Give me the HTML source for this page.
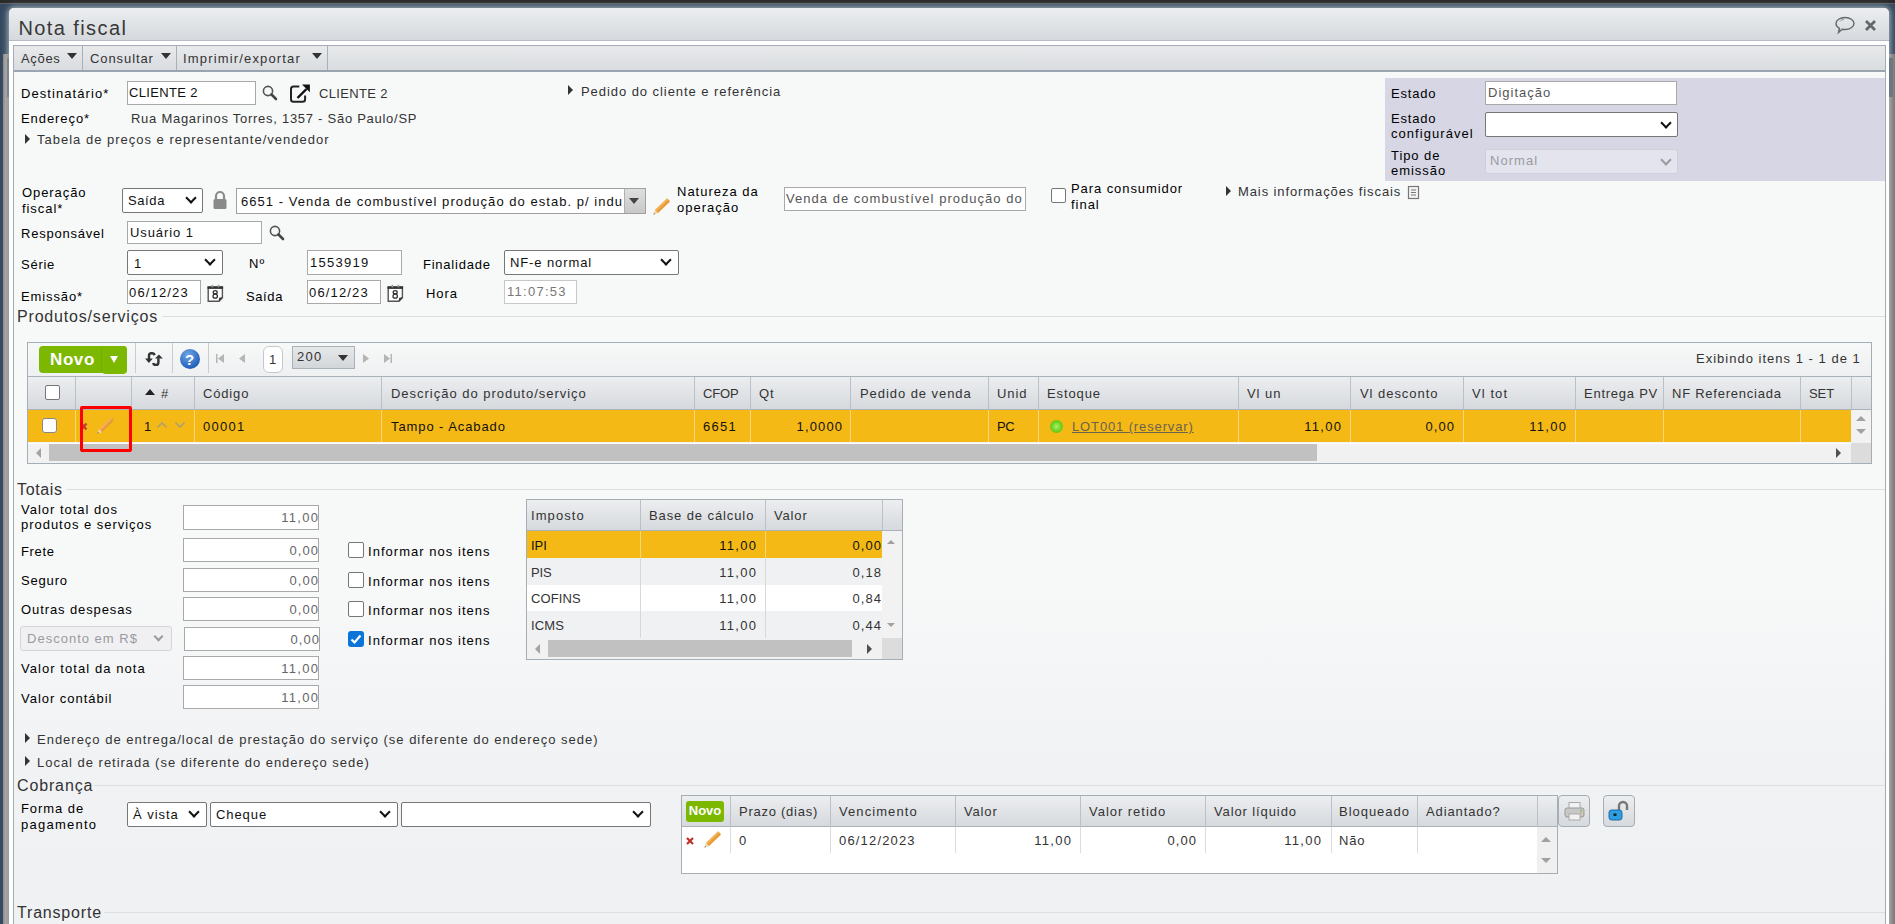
<!DOCTYPE html>
<html><head><meta charset="utf-8">
<style>
*{box-sizing:border-box}
html,body{margin:0;padding:0}
body{width:1895px;height:924px;overflow:hidden;position:relative;background:#34495f;font-family:"Liberation Sans",sans-serif;font-size:13px;letter-spacing:0.8px;color:#000}
.a{position:absolute;white-space:nowrap}
.t{position:absolute;white-space:nowrap;line-height:16px;height:16px}
.g{color:#333}
.inp{position:absolute;background:#fff;border:1px solid #a9a9a9}
.sel{position:absolute;background:#fff;border:1px solid #767676;border-radius:2px}
.chev{position:absolute;margin-left:1px;width:8px;height:8px;border-right:2px solid #111;border-bottom:2px solid #111;transform:rotate(45deg)}
.tri{position:absolute;width:0;height:0;border-top:5px solid transparent;border-bottom:5px solid transparent;border-left:5px solid #333;margin-top:-1px}
.cb{position:absolute;width:14px;height:14px;border:1px solid #767676;border-radius:2px;background:#fff}
.sec{position:absolute;font-size:16px;letter-spacing:0.3px;color:#333;line-height:20px}
.hl{position:absolute;height:1px;background:#dcdee0}
.vl{position:absolute;width:1px}
.hdr{position:absolute;background:linear-gradient(#eceef0,#d6d9dd)}
</style></head><body>
<!-- background -->
<div class="a" style="left:0;top:0;width:1895px;height:3px;background:#2b2b2b"></div>
<div class="a" style="left:0;top:3px;width:1895px;height:1px;background:#5a5f66"></div>
<div class="a" style="left:9px;top:8px;width:1880px;height:916px;box-shadow:0 0 6px 1px rgba(200,207,214,0.85);border-radius:5px 5px 0 0"></div>
<div class="a" style="left:3px;top:54px;width:6px;height:870px;background:linear-gradient(90deg,#8a8a8a,#a5a5a5 40%,#9a9a9a)"></div>
<div class="a" style="left:1889px;top:54px;width:6px;height:870px;background:linear-gradient(90deg,#a8a8a8,#8c8c8c 50%,#7a7a7a)"></div>
<div class="a" style="left:7px;top:58px;width:2px;height:39px;background:#7d858d"></div>
<div class="a" style="left:1889px;top:58px;width:4px;height:39px;background:#6f7882"></div>
<div class="a" style="left:1892px;top:110px;width:1px;height:814px;background:#8a8a8a"></div>
<!-- window -->
<div class="a" style="left:9px;top:8px;width:1880px;height:916px;background:#fff;border-radius:5px 5px 0 0;overflow:hidden">
  <div class="a" style="left:0;top:0;width:1880px;height:33px;background:linear-gradient(#eceef0,#d5d9dd);border-bottom:1px solid #b5bcc4"></div>
</div>
<div class="a ls" style="left: 18.5px; top: 15px; font-size: 20px; letter-spacing: 1.4px; color: rgb(56, 56, 56); line-height: 26px;">Nota fiscal</div>
<!-- content panel -->
<div class="a" style="left:13px;top:45px;width:1873px;height:879px;border:1px solid #a3acb5;border-bottom:none;background:linear-gradient(#f7f9f9 0px,#f7f8f8 540px,#f1f2f4 720px,#f0f1f3 879px)"></div>
<!-- toolbar -->
<div class="a" style="left:14px;top:46px;width:1871px;height:26px;background:linear-gradient(#e8eaec,#d9dce0);border-bottom:2px solid #9ba5af"></div>
<div class="vl" style="left:82px;top:46px;height:24px;background:#a8b0b8"></div>
<div class="vl" style="left:176px;top:46px;height:24px;background:#a8b0b8"></div>
<div class="vl" style="left:327px;top:46px;height:24px;background:#a8b0b8"></div>

<!-- toolbar texts -->
<div class="t g" style="left: 21px; top: 51px; letter-spacing: 0.67px;">Ações</div>
<div class="a" style="left:67px;top:53px;width:0;height:0;border-left:5px solid transparent;border-right:5px solid transparent;border-top:6px solid #333"></div>
<div class="t g" style="left: 90px; top: 51px; letter-spacing: 0.91px;">Consultar</div>
<div class="a" style="left:161px;top:53px;width:0;height:0;border-left:5px solid transparent;border-right:5px solid transparent;border-top:6px solid #333"></div>
<div class="t g" style="left: 183px; top: 51px; letter-spacing: 1.16px;">Imprimir/exportar</div>
<div class="a" style="left:312px;top:53px;width:0;height:0;border-left:5px solid transparent;border-right:5px solid transparent;border-top:6px solid #333"></div>
<!-- title icons -->
<svg class="a" style="left:1834px;top:15px" width="22" height="20" viewBox="0 0 22 20"><path d="M11 2.5c5 0 9 2.7 9 6s-4 6-9 6c-1 0-2-.1-2.9-.3L4.5 17.5l.9-4.2C3.3 12.2 2 10.5 2 8.5c0-3.3 4-6 9-6z" fill="none" stroke="#666" stroke-width="1.4"></path><path d="M6 6.5c1-1.3 2.5-2 4-2.2" fill="none" stroke="#888" stroke-width="1"></path></svg>
<svg class="a" style="left:1864px;top:19px" width="13" height="13" viewBox="0 0 13 13"><path d="M2 2L11 11M11 2L2 11" stroke="#666" stroke-width="2.8" stroke-linecap="butt"></path></svg>

<!-- Destinatario row -->
<div class="t" style="left: 21px; top: 86px; letter-spacing: 1.07px;">Destinatário*</div>
<div class="inp" style="left:127px;top:81px;width:129px;height:24px"></div>
<div class="t" style="left: 129px; top: 85px; color: rgb(17, 17, 17); letter-spacing: 0.34px;">CLIENTE 2</div>
<svg class="a" style="left:261px;top:84px" width="18" height="17" viewBox="0 0 18 17"><circle cx="7" cy="7" r="4.6" fill="none" stroke="#555" stroke-width="1.6"></circle><path d="M10.5 10.5L15 15" stroke="#444" stroke-width="2.6" stroke-linecap="round"></path></svg>
<svg class="a" style="left:288px;top:83px" width="24" height="21" viewBox="0 0 24 21"><path d="M11.3 3.4H5.5Q3 3.4 3 6V16.2Q3 18.7 5.5 18.7H14.6Q17.1 18.7 17.1 16.2V12.6" fill="none" stroke="#222" stroke-width="2"></path><path d="M9.5 15L18.5 6" stroke="#111" stroke-width="2.4"></path><path d="M14 1.4H21.9V9.3z" fill="#111"></path></svg>
<div class="t g" style="left: 319px; top: 86px; letter-spacing: 0.34px;">CLIENTE 2</div>
<div class="tri" style="left:568px;top:86px"></div>
<div class="t g" style="left: 581px; top: 84px; letter-spacing: 0.94px;">Pedido do cliente e referência</div>
<div class="t" style="left: 21px; top: 111px; letter-spacing: 0.93px;">Endereço*</div>
<div class="t g" style="left: 131px; top: 111px; letter-spacing: 0.73px;">Rua Magarinos Torres, 1357 - São Paulo/SP</div>
<div class="tri" style="left:25px;top:135px"></div>
<div class="t g" style="left: 37px; top: 132px; letter-spacing: 1px;">Tabela de preços e representante/vendedor</div>

<!-- Estado panel -->
<div class="a" style="left:1385px;top:78px;width:500px;height:103px;background:#d6d6e4"></div>
<div class="t" style="left: 1391px; top: 86px; letter-spacing: 0.81px;">Estado</div>
<div class="inp" style="left:1485px;top:81px;width:192px;height:24px"></div>
<div class="t" style="left: 1488px; top: 85px; color: rgb(85, 85, 85); letter-spacing: 1px;">Digitação</div>
<div class="t" style="left: 1391px; top: 111px; letter-spacing: 0.81px;">Estado</div>
<div class="t" style="left: 1391px; top: 126px; letter-spacing: 1.05px;">configurável</div>
<div class="sel" style="left:1485px;top:112px;width:193px;height:25px"></div>
<div class="chev" style="left:1661px;top:119px"></div>
<div class="t" style="left: 1391px; top: 148px; letter-spacing: 0.93px;">Tipo de</div>
<div class="t" style="left: 1391px; top: 163px; letter-spacing: 0.95px;">emissão</div>
<div class="a" style="left:1485px;top:149px;width:193px;height:25px;background:#e4e4ee;border:1px solid #d0d0da;border-radius:2px"></div>
<div class="t" style="left: 1490px; top: 153px; color: rgb(154, 154, 162); letter-spacing: 1.05px;">Normal</div>
<div class="chev" style="left:1661px;top:156px;border-color:#9a9aa2"></div>

<!-- Operacao fiscal -->
<div class="t" style="left: 22px; top: 185px; letter-spacing: 0.92px;">Operação</div>
<div class="t" style="left: 22px; top: 201px; letter-spacing: 0.93px;">fiscal*</div>
<div class="sel" style="left:122px;top:188px;width:81px;height:25px"></div>
<div class="t" style="left: 128px; top: 193px; color: rgb(17, 17, 17); letter-spacing: 0.6px;">Saída</div>
<div class="chev" style="left:186px;top:194px"></div>
<svg class="a" style="left:212px;top:190px" width="16" height="20" viewBox="0 0 16 20"><path d="M4 9V6a4 4 0 0 1 8 0v3" fill="none" stroke="#8a8a8a" stroke-width="2.2"></path><rect x="1.5" y="9" width="13" height="10" rx="1.5" fill="#8a8a8a"></rect></svg>
<div class="inp" style="left:236px;top:188px;width:410px;height:26px;border-color:#a0a0a0"></div>
<div class="t" style="left: 241px; top: 194px; color: rgb(17, 17, 17); letter-spacing: 1.04px;">6651 - Venda de combustível produção do estab. p/ indu</div>
<div class="a" style="left:624px;top:189px;width:21px;height:24px;background:linear-gradient(#dedede,#c8c8c8);border-left:1px solid #b0b0b0"></div>
<div class="a" style="left:629px;top:198px;width:0;height:0;border-left:5px solid transparent;border-right:5px solid transparent;border-top:6px solid #444"></div>
<svg class="a" style="left:651.8px;top:198.0px" width="20" height="20" viewBox="0 0 20 20"><g transform="translate(1.5,16.5) rotate(-44)"><rect x="4" y="-2.2" width="17.2" height="4.4" rx="1" fill="#eb9a38"></rect><rect x="4" y="-2.2" width="17.2" height="1.8" rx="0.8" fill="#f3b35a"></rect><path d="M0 0L4.2 -2.2V2.2z" fill="#f2d6a8"></path><path d="M0 0L1.4 -0.75V0.75z" fill="#444"></path></g></svg>
<div class="t" style="left: 677px; top: 184px; letter-spacing: 0.99px;">Natureza da</div>
<div class="t" style="left: 677px; top: 200px; letter-spacing: 0.99px;">operação</div>
<div class="inp" style="left:784px;top:187px;width:242px;height:24px"></div>
<div class="t" style="left: 786px; top: 191px; color: rgb(85, 85, 85); letter-spacing: 1.03px;">Venda de combustível produção do</div>
<div class="cb" style="left:1051px;top:188px;width:15px;height:15px"></div>
<div class="t" style="left: 1071px; top: 181px; letter-spacing: 0.92px;">Para consumidor</div>
<div class="t" style="left: 1071px; top: 197px; letter-spacing: 0.97px;">final</div>
<div class="tri" style="left:1226px;top:187px"></div>
<div class="t g" style="left: 1238px; top: 184px; letter-spacing: 0.9px;">Mais informações fiscais</div>
<svg class="a" style="left:1407px;top:185px" width="13" height="15" viewBox="0 0 13 15"><rect x="1.5" y="1.5" width="10" height="12" fill="#f4f4f4" stroke="#777" stroke-width="1.2"></rect><path d="M4 5h5M4 7.5h5M4 10h5" stroke="#777" stroke-width="1"></path></svg>

<!-- Responsavel -->
<div class="t" style="left: 21px; top: 226px; letter-spacing: 0.78px;">Responsável</div>
<div class="inp" style="left:127px;top:221px;width:135px;height:23px"></div>
<div class="t" style="left: 130px; top: 225px; color: rgb(17, 17, 17); letter-spacing: 0.91px;">Usuário 1</div>
<svg class="a" style="left:268px;top:224px" width="18" height="17" viewBox="0 0 18 17"><circle cx="7" cy="7" r="4.6" fill="none" stroke="#555" stroke-width="1.6"></circle><path d="M10.5 10.5L15 15" stroke="#444" stroke-width="2.6" stroke-linecap="round"></path></svg>

<!-- Serie -->
<div class="t" style="left: 21px; top: 257px; letter-spacing: 0.74px;">Série</div>
<div class="sel" style="left:127px;top:250px;width:96px;height:25px"></div>
<div class="t" style="left: 134px; top: 256px; color: rgb(17, 17, 17); letter-spacing: 1.25px;">1</div>
<div class="chev" style="left:205px;top:256px"></div>
<div class="t" style="left: 249px; top: 256px; letter-spacing: 1.06px;">Nº</div>
<div class="inp" style="left:307px;top:250px;width:95px;height:25px"></div>
<div class="t" style="left: 310px; top: 255px; color: rgb(17, 17, 17); letter-spacing: 1.25px;">1553919</div>
<div class="t" style="left: 423px; top: 257px; letter-spacing: 0.77px;">Finalidade</div>
<div class="sel" style="left:504px;top:250px;width:175px;height:25px"></div>
<div class="t" style="left: 510px; top: 255px; color: rgb(17, 17, 17); letter-spacing: 0.89px;">NF-e normal</div>
<div class="chev" style="left:661px;top:256px"></div>

<!-- Emissao -->
<div class="t" style="left: 21px; top: 289px; letter-spacing: 0.88px;">Emissão*</div>
<div class="inp" style="left:127px;top:280px;width:74px;height:24px"></div>
<div class="t" style="left: 129px; top: 285px; color: rgb(17, 17, 17); letter-spacing: 1.16px;">06/12/23</div>
<svg class="a" style="left:206px;top:284px" width="18" height="19" viewBox="0 0 18 19"><path d="M2.2 3.2H16.4V13.6L13 17.2H2.2Z" fill="#fff" stroke="#555" stroke-width="1.4"></path><rect x="1.5" y="2.3" width="15.6" height="2.6" fill="#333"></rect><rect x="5.6" y="0.8" width="1.6" height="2.6" fill="#999"></rect><rect x="11.6" y="0.8" width="1.6" height="2.6" fill="#999"></rect><ellipse cx="9.2" cy="8.3" rx="2" ry="1.7" fill="none" stroke="#333" stroke-width="1.3"></ellipse><ellipse cx="9.2" cy="12.2" rx="2.2" ry="2" fill="none" stroke="#333" stroke-width="1.3"></ellipse><path d="M12.6 17.4L16.8 13.2L13.2 13.8Z" fill="#333"></path></svg>
<div class="t" style="left: 246px; top: 289px; letter-spacing: 0.6px;">Saída</div>
<div class="inp" style="left:307px;top:280px;width:74px;height:24px"></div>
<div class="t" style="left: 309px; top: 285px; color: rgb(17, 17, 17); letter-spacing: 1.16px;">06/12/23</div>
<svg class="a" style="left:386px;top:284px" width="18" height="19" viewBox="0 0 18 19"><path d="M2.2 3.2H16.4V13.6L13 17.2H2.2Z" fill="#fff" stroke="#555" stroke-width="1.4"></path><rect x="1.5" y="2.3" width="15.6" height="2.6" fill="#333"></rect><rect x="5.6" y="0.8" width="1.6" height="2.6" fill="#999"></rect><rect x="11.6" y="0.8" width="1.6" height="2.6" fill="#999"></rect><ellipse cx="9.2" cy="8.3" rx="2" ry="1.7" fill="none" stroke="#333" stroke-width="1.3"></ellipse><ellipse cx="9.2" cy="12.2" rx="2.2" ry="2" fill="none" stroke="#333" stroke-width="1.3"></ellipse><path d="M12.6 17.4L16.8 13.2L13.2 13.8Z" fill="#333"></path></svg>
<div class="t" style="left: 426px; top: 286px; letter-spacing: 0.91px;">Hora</div>
<div class="inp" style="left:504px;top:280px;width:73px;height:24px;border-color:#c8c8c8"></div>
<div class="t" style="left: 507px; top: 284px; color: rgb(119, 119, 119); letter-spacing: 1.28px;">11:07:53</div>

<!-- Produtos/servicos section -->
<div class="sec" style="left: 17px; top: 307px; letter-spacing: 0.82px;">Produtos/serviços</div>
<div class="hl" style="left:162px;top:316px;width:1723px"></div>

<!-- products grid -->
<div class="a" style="left:27px;top:342px;width:1845px;height:122px;border:1px solid #a5adb5;background:#f2f2f2"></div>
<div class="a" style="left:28px;top:343px;width:1843px;height:33px;background:linear-gradient(#f7f8f8,#eef0f1)"></div>
<div class="a" style="left:39px;top:346px;width:88px;height:27px;background:#7cb800;border-radius:4px"></div>
<div class="a" style="left:102px;top:346px;width:25px;height:28px;background:#7cb800;border-radius:4px;box-shadow:-1px 0 0 rgba(0,0,0,0.06)"></div>
<div class="a" style="left:50px;top:349px;font-size:17px;font-weight:bold;color:#fff;letter-spacing:0.6px;line-height:21px">Novo</div>
<div class="a" style="left:110px;top:356px;width:0;height:0;border-left:4px solid transparent;border-right:4px solid transparent;border-top:7px solid #fff"></div>
<div class="vl" style="left:135px;top:343px;height:30px;background:#c8cdd2"></div>
<div class="vl" style="left:172px;top:343px;height:30px;background:#c8cdd2"></div>
<div class="vl" style="left:208px;top:343px;height:30px;background:#c8cdd2"></div>
<svg class="a" style="left:144px;top:350px" width="20" height="18" viewBox="0 0 20 18"><path d="M10.5 5.2Q10.2 3.2 8 3.2H7.2Q5 3.2 5 5.5V9.5" fill="none" stroke="#333" stroke-width="2.4"></path><path d="M1 8.6H8.8L4.9 12.9z" fill="#333"></path><path d="M9.2 12.9Q9.6 14.9 11.8 14.9H12.2Q14.4 14.9 14.4 12.6V8.3" fill="none" stroke="#333" stroke-width="2.4"></path><path d="M11 8.6H18.8L14.9 4.6z" fill="#333"></path></svg>
<svg class="a" style="left:179px;top:348px" width="22" height="22" viewBox="0 0 22 22"><defs><radialGradient id="hg" cx="40%" cy="30%" r="70%"><stop offset="0" stop-color="#6fa8e8"></stop><stop offset="1" stop-color="#1e5cb8"></stop></radialGradient></defs><circle cx="11" cy="11" r="10" fill="url(#hg)"></circle><text x="11" y="16.5" font-size="15" font-weight="bold" text-anchor="middle" fill="#fff" font-family="Liberation Sans">?</text></svg>
<svg class="a" style="left:215px;top:353px" width="10" height="11" viewBox="0 0 10 11"><rect x="1" y="1" width="1.5" height="9" fill="#b5b5b5"></rect><path d="M9 1v9L3 5.5z" fill="#b5b5b5"></path></svg>
<svg class="a" style="left:238px;top:353px" width="8" height="11" viewBox="0 0 8 11"><path d="M7 1v9L1 5.5z" fill="#b5b5b5"></path></svg>
<div class="a" style="left:263px;top:346px;width:20px;height:27px;background:#fff;border:1px solid #c5c9cd;border-radius:6px"></div>
<div class="t nols" style="left:269px;top:352px;color:#333;letter-spacing:0">1</div>
<div class="a" style="left:292px;top:346px;width:63px;height:23px;background:linear-gradient(#e6e8ea,#d3d6d9);border:1px solid #a8b0b8"></div>
<div class="t" style="left: 297px; top: 349px; color: rgb(51, 51, 51); letter-spacing: 1.25px;">200</div>
<div class="a" style="left:338px;top:355px;width:0;height:0;border-left:5px solid transparent;border-right:5px solid transparent;border-top:6px solid #333"></div>
<svg class="a" style="left:362px;top:353px" width="8" height="11" viewBox="0 0 8 11"><path d="M1 1v9l6-4.5z" fill="#b5b5b5"></path></svg>
<svg class="a" style="left:383px;top:353px" width="10" height="11" viewBox="0 0 10 11"><path d="M1 1v9l6-4.5z" fill="#b5b5b5"></path><rect x="7.5" y="1" width="1.5" height="9" fill="#b5b5b5"></rect></svg>
<div class="t g" style="left: 1696px; top: 351px; letter-spacing: 1.01px;">Exibindo itens 1 - 1 de 1</div>
<!-- header -->
<div class="hdr" style="left:28px;top:376px;width:1843px;height:34px;border-top:1px solid #a9b1b9;border-bottom:1px solid #a9b1b9"></div>
<div class="cb" style="left:45px;top:385px;width:15px;height:15px"></div>
<div class="a" style="left:145px;top:389px;width:0;height:0;border-left:5px solid transparent;border-right:5px solid transparent;border-bottom:6px solid #222"></div>
<div class="t g" style="left: 161px; top: 386px; letter-spacing: 3.93px;">#</div>
<div class="vl" style="left:75px;top:377px;height:32px;background:#b9c0c7"></div>
<div class="vl" style="left:131px;top:377px;height:32px;background:#b9c0c7"></div>
<div class="vl" style="left:194px;top:377px;height:32px;background:#b9c0c7"></div>
<div class="vl" style="left:381px;top:377px;height:32px;background:#b9c0c7"></div>
<div class="vl" style="left:694px;top:377px;height:32px;background:#b9c0c7"></div>
<div class="vl" style="left:750px;top:377px;height:32px;background:#b9c0c7"></div>
<div class="vl" style="left:850px;top:377px;height:32px;background:#b9c0c7"></div>
<div class="vl" style="left:988px;top:377px;height:32px;background:#b9c0c7"></div>
<div class="vl" style="left:1038px;top:377px;height:32px;background:#b9c0c7"></div>
<div class="vl" style="left:1238px;top:377px;height:32px;background:#b9c0c7"></div>
<div class="vl" style="left:1350px;top:377px;height:32px;background:#b9c0c7"></div>
<div class="vl" style="left:1463px;top:377px;height:32px;background:#b9c0c7"></div>
<div class="vl" style="left:1575px;top:377px;height:32px;background:#b9c0c7"></div>
<div class="vl" style="left:1663px;top:377px;height:32px;background:#b9c0c7"></div>
<div class="vl" style="left:1800px;top:377px;height:32px;background:#b9c0c7"></div>
<div class="vl" style="left:1851px;top:377px;height:32px;background:#b9c0c7"></div>
<div class="t g" style="left: 203px; top: 386px; letter-spacing: 0.84px;">Código</div>
<div class="t g" style="left: 391px; top: 386px; letter-spacing: 0.98px;">Descrição do produto/serviço</div>
<div class="t g" style="left: 703px; top: 386px; letter-spacing: -0.15px;">CFOP</div>
<div class="t g" style="left: 759px; top: 386px; letter-spacing: 0.99px;">Qt</div>
<div class="t g" style="left: 860px; top: 386px; letter-spacing: 0.94px;">Pedido de venda</div>
<div class="t g" style="left: 997px; top: 386px; letter-spacing: 0.91px;">Unid</div>
<div class="t g" style="left: 1047px; top: 386px; letter-spacing: 0.88px;">Estoque</div>
<div class="t g" style="left: 1247px; top: 386px; letter-spacing: 0.95px;">Vl un</div>
<div class="t g" style="left: 1360px; top: 386px; letter-spacing: 0.95px;">Vl desconto</div>
<div class="t g" style="left: 1472px; top: 386px; letter-spacing: 1.08px;">Vl tot</div>
<div class="t g" style="left: 1584px; top: 386px; letter-spacing: 0.75px;">Entrega PV</div>
<div class="t g" style="left: 1672px; top: 386px; letter-spacing: 0.76px;">NF Referenciada</div>
<div class="t g" style="left: 1809px; top: 386px; letter-spacing: -0.09px;">SET</div>

<!-- data row -->
<div class="a" style="left:28px;top:410px;width:1823px;height:32px;background:#f5b916"></div>
<div class="vl" style="left:75px;top:410px;height:32px;background:#f8d680"></div>
<div class="vl" style="left:131px;top:410px;height:32px;background:#f8d680"></div>
<div class="vl" style="left:194px;top:410px;height:32px;background:#f8d680"></div>
<div class="vl" style="left:381px;top:410px;height:32px;background:#f8d680"></div>
<div class="vl" style="left:694px;top:410px;height:32px;background:#f8d680"></div>
<div class="vl" style="left:750px;top:410px;height:32px;background:#f8d680"></div>
<div class="vl" style="left:850px;top:410px;height:32px;background:#f8d680"></div>
<div class="vl" style="left:988px;top:410px;height:32px;background:#f8d680"></div>
<div class="vl" style="left:1038px;top:410px;height:32px;background:#f8d680"></div>
<div class="vl" style="left:1238px;top:410px;height:32px;background:#f8d680"></div>
<div class="vl" style="left:1350px;top:410px;height:32px;background:#f8d680"></div>
<div class="vl" style="left:1463px;top:410px;height:32px;background:#f8d680"></div>
<div class="vl" style="left:1575px;top:410px;height:32px;background:#f8d680"></div>
<div class="vl" style="left:1663px;top:410px;height:32px;background:#f8d680"></div>
<div class="vl" style="left:1800px;top:410px;height:32px;background:#f8d680"></div>

<div class="cb" style="left:42px;top:418px;width:15px;height:15px;border-color:#888;border-radius:3px"></div>
<svg class="a" style="left:80px;top:422px" width="8" height="9" viewBox="0 0 8 9"><path d="M1.5 1.5L6.5 7.5M6.5 1.5L1.5 7.5" stroke="#c0392b" stroke-width="2"></path></svg>
<svg class="a" style="left:96.0px;top:417.1px" width="20" height="20" viewBox="0 0 20 20"><g transform="translate(1.5,16.5) rotate(-44)"><rect x="4" y="-2.2" width="17.2" height="4.4" rx="1" fill="#eb9a38"></rect><rect x="4" y="-2.2" width="17.2" height="1.8" rx="0.8" fill="#f3b35a"></rect><path d="M0 0L4.2 -2.2V2.2z" fill="#f2d6a8"></path><path d="M0 0L1.4 -0.75V0.75z" fill="#444"></path></g></svg>
<div class="t" style="left: 144px; top: 419px; color: rgb(17, 17, 17); letter-spacing: 1.25px;">1</div>
<svg class="a" style="left:156px;top:421px" width="12" height="8" viewBox="0 0 12 8"><path d="M1.5 6.5L6 2l4.5 4.5" fill="none" stroke="#b0a070" stroke-width="1.6"></path></svg>
<svg class="a" style="left:174px;top:421px" width="12" height="8" viewBox="0 0 12 8"><path d="M1.5 1.5L6 6l4.5-4.5" fill="none" stroke="#b0a070" stroke-width="1.6"></path></svg>
<div class="t" style="left: 203px; top: 419px; color: rgb(17, 17, 17); letter-spacing: 1.25px;">00001</div>
<div class="t" style="left: 391px; top: 419px; color: rgb(17, 17, 17); letter-spacing: 0.91px;">Tampo - Acabado</div>
<div class="t" style="left: 703px; top: 419px; color: rgb(17, 17, 17); letter-spacing: 1.25px;">6651</div>
<div class="t" style="left: 750px; top: 419px; width: 93.14px; text-align: right; color: rgb(17, 17, 17); letter-spacing: 1.14px;">1,0000</div>
<div class="t" style="left: 997px; top: 419px; color: rgb(17, 17, 17); letter-spacing: -0.36px;">PC</div>
<div class="a" style="left:1050px;top:420px;width:13px;height:13px;border-radius:50%;background:radial-gradient(circle at 50% 50%,#a8f060,#6cd020 55%,#58b010)"></div>
<div class="t" style="left: 1072px; top: 419px; color: rgb(107, 99, 80); text-decoration: underline; letter-spacing: 0.87px;">LOT001 (reservar)</div>
<div class="t" style="left: 1238px; top: 419px; width: 104.32px; text-align: right; color: rgb(17, 17, 17); letter-spacing: 1.32px;">11,00</div>
<div class="t" style="left: 1350px; top: 419px; width: 105.09px; text-align: right; color: rgb(17, 17, 17); letter-spacing: 1.09px;">0,00</div>
<div class="t" style="left: 1463px; top: 419px; width: 104.32px; text-align: right; color: rgb(17, 17, 17); letter-spacing: 1.32px;">11,00</div>
<!-- v scroll -->
<div class="a" style="left:1851px;top:410px;width:20px;height:33px;background:#f2f2f2"></div>
<div class="a" style="left:1856px;top:416px;width:0;height:0;border-left:5px solid transparent;border-right:5px solid transparent;border-bottom:5px solid #a0a0a0"></div>
<div class="a" style="left:1856px;top:429px;width:0;height:0;border-left:5px solid transparent;border-right:5px solid transparent;border-top:5px solid #a0a0a0"></div>
<!-- h scroll -->
<div class="a" style="left:28px;top:443px;width:1823px;height:20px;background:#f1f1f1;border-top:1px solid #fff"></div>
<div class="a" style="left:49px;top:444px;width:1268px;height:17px;background:#c1c1c1"></div>
<div class="a" style="left:36px;top:448px;width:0;height:0;border-top:5px solid transparent;border-bottom:5px solid transparent;border-right:5px solid #a3a3a3"></div>
<div class="a" style="left:1836px;top:448px;width:0;height:0;border-top:5px solid transparent;border-bottom:5px solid transparent;border-left:5px solid #505050"></div>
<div class="a" style="left:1851px;top:443px;width:20px;height:20px;background:#dcdcdc"></div>
<!-- red highlight -->
<div class="a" style="left:80px;top:406px;width:52px;height:46px;border:3px solid #ff0000;border-radius:2px"></div>

<!-- Totais -->
<div class="sec" style="left: 17px; top: 480px; letter-spacing: 0.65px;">Totais</div>
<div class="hl" style="left:66px;top:489px;width:1819px"></div>
<div class="t" style="left: 21px; top: 502px; letter-spacing: 0.99px;">Valor total dos</div>
<div class="t" style="left: 21px; top: 517px; letter-spacing: 0.97px;">produtos e serviços</div>
<div class="t" style="left: 21px; top: 544px; letter-spacing: 0.63px;">Frete</div>
<div class="t" style="left: 21px; top: 573px; letter-spacing: 0.83px;">Seguro</div>
<div class="t" style="left: 21px; top: 602px; letter-spacing: 0.9px;">Outras despesas</div>
<div class="t" style="left: 21px; top: 661px; letter-spacing: 1.06px;">Valor total da nota</div>
<div class="t" style="left: 21px; top: 691px; letter-spacing: 0.97px;">Valor contábil</div>
<div class="a" style="left:20px;top:626px;width:152px;height:25px;background:#f0f0f2;border:1px solid #d6d6da;border-radius:3px"></div>
<div class="t" style="left: 27px; top: 631px; color: rgb(154, 154, 160); letter-spacing: 1.01px;">Desconto em R$</div>
<div class="chev" style="left:154px;top:633px;border-color:#9a9aa0;width:7px;height:7px"></div>
<div class="inp" style="left:183px;top:505px;width:136px;height:25px"></div>
<div class="t" style="left: 183px; top: 510px; width: 136.32px; text-align: right; color: rgb(102, 102, 102); letter-spacing: 1.32px;">11,00</div>
<div class="inp" style="left:183px;top:538px;width:136px;height:24px"></div>
<div class="t" style="left: 183px; top: 543px; width: 136.09px; text-align: right; color: rgb(102, 102, 102); letter-spacing: 1.09px;">0,00</div>
<div class="inp" style="left:183px;top:568px;width:136px;height:24px"></div>
<div class="t" style="left: 183px; top: 573px; width: 136.09px; text-align: right; color: rgb(102, 102, 102); letter-spacing: 1.09px;">0,00</div>
<div class="inp" style="left:183px;top:597px;width:136px;height:24px"></div>
<div class="t" style="left: 183px; top: 602px; width: 136.09px; text-align: right; color: rgb(102, 102, 102); letter-spacing: 1.09px;">0,00</div>
<div class="inp" style="left:184px;top:627px;width:136px;height:24px"></div>
<div class="t" style="left: 184px; top: 632px; width: 136.09px; text-align: right; color: rgb(102, 102, 102); letter-spacing: 1.09px;">0,00</div>
<div class="inp" style="left:183px;top:656px;width:136px;height:24px"></div>
<div class="t" style="left: 183px; top: 661px; width: 136.32px; text-align: right; color: rgb(102, 102, 102); letter-spacing: 1.32px;">11,00</div>
<div class="inp" style="left:183px;top:685px;width:136px;height:24px"></div>
<div class="t" style="left: 183px; top: 690px; width: 136.32px; text-align: right; color: rgb(102, 102, 102); letter-spacing: 1.32px;">11,00</div>
<div class="cb" style="left:348px;top:542px;width:16px;height:16px"></div>
<div class="t" style="left: 368px; top: 544px; letter-spacing: 1.03px;">Informar nos itens</div>
<div class="cb" style="left:348px;top:572px;width:16px;height:16px"></div>
<div class="t" style="left: 368px; top: 574px; letter-spacing: 1.03px;">Informar nos itens</div>
<div class="cb" style="left:348px;top:601px;width:16px;height:16px"></div>
<div class="t" style="left: 368px; top: 603px; letter-spacing: 1.03px;">Informar nos itens</div>
<div class="a" style="left:348px;top:631px;width:16px;height:16px;background:#0b74d9;border-radius:3px"></div><svg class="a" style="left:348px;top:631px" width="16" height="16" viewBox="0 0 16 16"><path d="M3.5 8.5l3 3 6-7" fill="none" stroke="#fff" stroke-width="2.2"></path></svg>
<div class="t" style="left: 368px; top: 633px; letter-spacing: 1.03px;">Informar nos itens</div>

<div class="a" style="left:526px;top:499px;width:377px;height:161px;border:1px solid #a5adb5;background:#f2f2f2"></div>
<div class="hdr" style="left:527px;top:500px;width:375px;height:31px;border-bottom:1px solid #a9b1b9"></div>
<div class="vl" style="left:640px;top:500px;height:30px;background:#b9c0c7"></div>
<div class="vl" style="left:765px;top:500px;height:30px;background:#b9c0c7"></div>
<div class="vl" style="left:882px;top:500px;height:30px;background:#b9c0c7"></div>
<div class="t g" style="left: 531px; top: 508px; letter-spacing: 1.09px;">Imposto</div>
<div class="t g" style="left: 649px; top: 508px; letter-spacing: 0.9px;">Base de cálculo</div>
<div class="t g" style="left: 774px; top: 508px; letter-spacing: 0.84px;">Valor</div>
<div class="a" style="left:527px;top:531px;width:355px;height:27px;background:#f5b916"></div>
<div class="a" style="left:527px;top:558px;width:355px;height:27px;background:#f0f1f3"></div>
<div class="a" style="left:527px;top:585px;width:355px;height:26px;background:#fff"></div>
<div class="a" style="left:527px;top:611px;width:355px;height:27px;background:#f0f1f3"></div>
<div class="vl" style="left:640px;top:531px;height:107px;background:#d8d8d8"></div>
<div class="vl" style="left:765px;top:531px;height:107px;background:#d8d8d8"></div>
<div class="vl" style="left:640px;top:531px;height:27px;background:#f8d680"></div>
<div class="vl" style="left:765px;top:531px;height:27px;background:#f8d680"></div>
<div class="a" style="left:527px;top:638px;width:355px;height:21px;background:#f1f1f1"></div>
<div class="a" style="left:548px;top:640px;width:304px;height:17px;background:#c1c1c1"></div>
<div class="a" style="left:535px;top:644px;width:0;height:0;border-top:5px solid transparent;border-bottom:5px solid transparent;border-right:5px solid #a3a3a3"></div>
<div class="a" style="left:867px;top:644px;width:0;height:0;border-top:5px solid transparent;border-bottom:5px solid transparent;border-left:5px solid #505050"></div>
<div class="a" style="left:882px;top:638px;width:20px;height:21px;background:#dcdcdc"></div>
<div class="a" style="left:887px;top:540px;width:0;height:0;border-left:4px solid transparent;border-right:4px solid transparent;border-bottom:4px solid #a0a0a0"></div>
<div class="a" style="left:887px;top:623px;width:0;height:0;border-left:4px solid transparent;border-right:4px solid transparent;border-top:4px solid #a0a0a0"></div>
<div class="t" style="left: 531px; top: 538px; color: rgb(17, 17, 17); letter-spacing: 0px;">IPI</div>
<div class="t" style="left: 640px; top: 538px; width: 117.32px; text-align: right; color: rgb(17, 17, 17); letter-spacing: 1.32px;">11,00</div>
<div class="t" style="left: 765px; top: 538px; width: 117.09px; text-align: right; color: rgb(17, 17, 17); letter-spacing: 1.09px;">0,00</div>
<div class="t" style="left: 531px; top: 565px; color: rgb(51, 51, 51); letter-spacing: -0.18px;">PIS</div>
<div class="t" style="left: 640px; top: 565px; width: 117.32px; text-align: right; color: rgb(51, 51, 51); letter-spacing: 1.32px;">11,00</div>
<div class="t" style="left: 765px; top: 565px; width: 117.09px; text-align: right; color: rgb(51, 51, 51); letter-spacing: 1.09px;">0,18</div>
<div class="t" style="left: 531px; top: 591px; color: rgb(51, 51, 51); letter-spacing: 0.12px;">COFINS</div>
<div class="t" style="left: 640px; top: 591px; width: 117.32px; text-align: right; color: rgb(51, 51, 51); letter-spacing: 1.32px;">11,00</div>
<div class="t" style="left: 765px; top: 591px; width: 117.09px; text-align: right; color: rgb(51, 51, 51); letter-spacing: 1.09px;">0,84</div>
<div class="t" style="left: 531px; top: 618px; color: rgb(51, 51, 51); letter-spacing: 0.17px;">ICMS</div>
<div class="t" style="left: 640px; top: 618px; width: 117.32px; text-align: right; color: rgb(51, 51, 51); letter-spacing: 1.32px;">11,00</div>
<div class="t" style="left: 765px; top: 618px; width: 117.09px; text-align: right; color: rgb(51, 51, 51); letter-spacing: 1.09px;">0,44</div>

<!-- collapsible sections -->
<div class="tri" style="left:25px;top:734px"></div>
<div class="t g" style="left: 37px; top: 732px; letter-spacing: 0.99px;">Endereço de entrega/local de prestação do serviço (se diferente do endereço sede)</div>
<div class="tri" style="left:25px;top:757px"></div>
<div class="t g" style="left: 37px; top: 755px; letter-spacing: 0.98px;">Local de retirada (se diferente do endereço sede)</div>
<!-- Cobranca -->
<div class="sec" style="left: 17px; top: 776px; letter-spacing: 0.86px;">Cobrança</div>
<div class="hl" style="left:94px;top:785px;width:1791px"></div>
<div class="t" style="left: 21px; top: 801px; letter-spacing: 0.93px;">Forma de</div>
<div class="t" style="left: 21px; top: 817px; letter-spacing: 1.24px;">pagamento</div>
<div class="sel" style="left:127px;top:802px;width:80px;height:25px"></div>
<div class="t" style="left: 133px; top: 807px; color: rgb(17, 17, 17); letter-spacing: 0.96px;">À vista</div>
<div class="chev" style="left:189px;top:808px"></div>
<div class="sel" style="left:210px;top:802px;width:188px;height:25px"></div>
<div class="t" style="left: 216px; top: 807px; color: rgb(17, 17, 17); letter-spacing: 0.92px;">Cheque</div>
<div class="chev" style="left:380px;top:808px"></div>
<div class="sel" style="left:401px;top:802px;width:250px;height:25px"></div>
<div class="chev" style="left:633px;top:808px"></div>
<!-- parcelas grid -->
<div class="a" style="left:681px;top:795px;width:877px;height:79px;border:1px solid #a5adb5;background:#fff"></div>
<div class="hdr" style="left:682px;top:796px;width:875px;height:31px;border-bottom:1px solid #a9b1b9"></div>
<div class="a" style="left:686px;top:801px;width:38px;height:21px;background:#7cb800;border-radius:3px"></div>
<div class="a" style="left:686px;top:803px;width:38px;font-size:13px;font-weight:bold;color:#fff;letter-spacing:0;text-align:center;line-height:16px">Novo</div>
<div class="vl" style="left:730px;top:796px;height:31px;background:#b9c0c7"></div>
<div class="vl" style="left:730px;top:827px;height:26px;background:#dcdcdc"></div>
<div class="vl" style="left:830px;top:796px;height:31px;background:#b9c0c7"></div>
<div class="vl" style="left:830px;top:827px;height:26px;background:#dcdcdc"></div>
<div class="vl" style="left:955px;top:796px;height:31px;background:#b9c0c7"></div>
<div class="vl" style="left:955px;top:827px;height:26px;background:#dcdcdc"></div>
<div class="vl" style="left:1080px;top:796px;height:31px;background:#b9c0c7"></div>
<div class="vl" style="left:1080px;top:827px;height:26px;background:#dcdcdc"></div>
<div class="vl" style="left:1205px;top:796px;height:31px;background:#b9c0c7"></div>
<div class="vl" style="left:1205px;top:827px;height:26px;background:#dcdcdc"></div>
<div class="vl" style="left:1331px;top:796px;height:31px;background:#b9c0c7"></div>
<div class="vl" style="left:1331px;top:827px;height:26px;background:#dcdcdc"></div>
<div class="vl" style="left:1417px;top:796px;height:31px;background:#b9c0c7"></div>
<div class="vl" style="left:1417px;top:827px;height:26px;background:#dcdcdc"></div>
<div class="vl" style="left:1537px;top:796px;height:31px;background:#b9c0c7"></div>
<div class="t g" style="left: 739px; top: 804px; letter-spacing: 0.74px;">Prazo (dias)</div>
<div class="t g" style="left: 839px; top: 804px; letter-spacing: 1.08px;">Vencimento</div>
<div class="t g" style="left: 964px; top: 804px; letter-spacing: 0.84px;">Valor</div>
<div class="t g" style="left: 1089px; top: 804px; letter-spacing: 0.97px;">Valor retido</div>
<div class="t g" style="left: 1214px; top: 804px; letter-spacing: 0.89px;">Valor líquido</div>
<div class="t g" style="left: 1339px; top: 804px; letter-spacing: 0.97px;">Bloqueado</div>
<div class="t g" style="left: 1426px; top: 804px; letter-spacing: 0.89px;">Adiantado?</div>

<svg class="a" style="left:685px;top:836px" width="10" height="10" viewBox="0 0 10 10"><path d="M2 2L8 8M8 2L2 8" stroke="#c0302a" stroke-width="2.2"></path></svg>
<svg class="a" style="left:702.5px;top:830.5px" width="20" height="20" viewBox="0 0 20 20"><g transform="translate(1.5,16.5) rotate(-44)"><rect x="4" y="-2.2" width="17.2" height="4.4" rx="1" fill="#eb9a38"></rect><rect x="4" y="-2.2" width="17.2" height="1.8" rx="0.8" fill="#f3b35a"></rect><path d="M0 0L4.2 -2.2V2.2z" fill="#f2d6a8"></path><path d="M0 0L1.4 -0.75V0.75z" fill="#444"></path></g></svg>
<div class="t g" style="left: 739px; top: 833px; letter-spacing: 1.25px;">0</div>
<div class="t g" style="left: 839px; top: 833px; letter-spacing: 1.17px;">06/12/2023</div>
<div class="t g" style="left: 955px; top: 833px; width: 117.32px; text-align: right; letter-spacing: 1.32px;">11,00</div>
<div class="t g" style="left: 1080px; top: 833px; width: 117.09px; text-align: right; letter-spacing: 1.09px;">0,00</div>
<div class="t g" style="left: 1205px; top: 833px; width: 117.32px; text-align: right; letter-spacing: 1.32px;">11,00</div>
<div class="t g" style="left: 1339px; top: 833px; letter-spacing: 0.81px;">Não</div>
<div class="a" style="left:1537px;top:827px;width:20px;height:46px;background:#f0f0f0"></div>
<div class="a" style="left:1541px;top:837px;width:0;height:0;border-left:5px solid transparent;border-right:5px solid transparent;border-bottom:5px solid #a0a0a0"></div>
<div class="a" style="left:1541px;top:858px;width:0;height:0;border-left:5px solid transparent;border-right:5px solid transparent;border-top:5px solid #a0a0a0"></div>
<div class="vl" style="left:1557px;top:796px;height:78px;background:#a5adb5"></div>
<!-- print / lock buttons -->
<div class="a" style="left:1558px;top:795px;width:32px;height:32px;background:linear-gradient(#eceef0,#d6d9dd);border:1px solid #a5adb5;border-radius:4px"></div>
<svg class="a" style="left:1563px;top:800px" width="23" height="23" viewBox="0 0 23 23"><rect x="6" y="2.5" width="11" height="6" fill="#f2f2f2" stroke="#aaa"></rect><rect x="2" y="8" width="19" height="9" rx="2" fill="#c8c8c8" stroke="#999"></rect><rect x="6" y="14" width="11" height="6" fill="#f2f2f2" stroke="#aaa"></rect><circle cx="18" cy="10.5" r=".9" fill="#6c6"></circle><circle cx="18" cy="12.5" r=".9" fill="#cb4"></circle></svg>
<div class="a" style="left:1603px;top:795px;width:32px;height:32px;background:linear-gradient(#eceef0,#d6d9dd);border:1px solid #a5adb5;border-radius:4px"></div>
<svg class="a" style="left:1606px;top:800px" width="26" height="23" viewBox="0 0 26 23"><path d="M13 11V6a4 4 0 0 1 8 0v4" fill="none" stroke="#777" stroke-width="2.4"></path><rect x="3" y="10" width="13" height="10" rx="2.5" fill="#2f9ee0" stroke="#1a6aa8" stroke-width="1"></rect><rect x="7.5" y="13.5" width="3" height="2.5" fill="#123"></rect></svg>
<!-- Transporte -->
<div class="sec" style="left: 17px; top: 903px; letter-spacing: 0.81px;">Transporte</div>
<div class="hl" style="left:104px;top:912px;width:1781px"></div>

</body></html>
